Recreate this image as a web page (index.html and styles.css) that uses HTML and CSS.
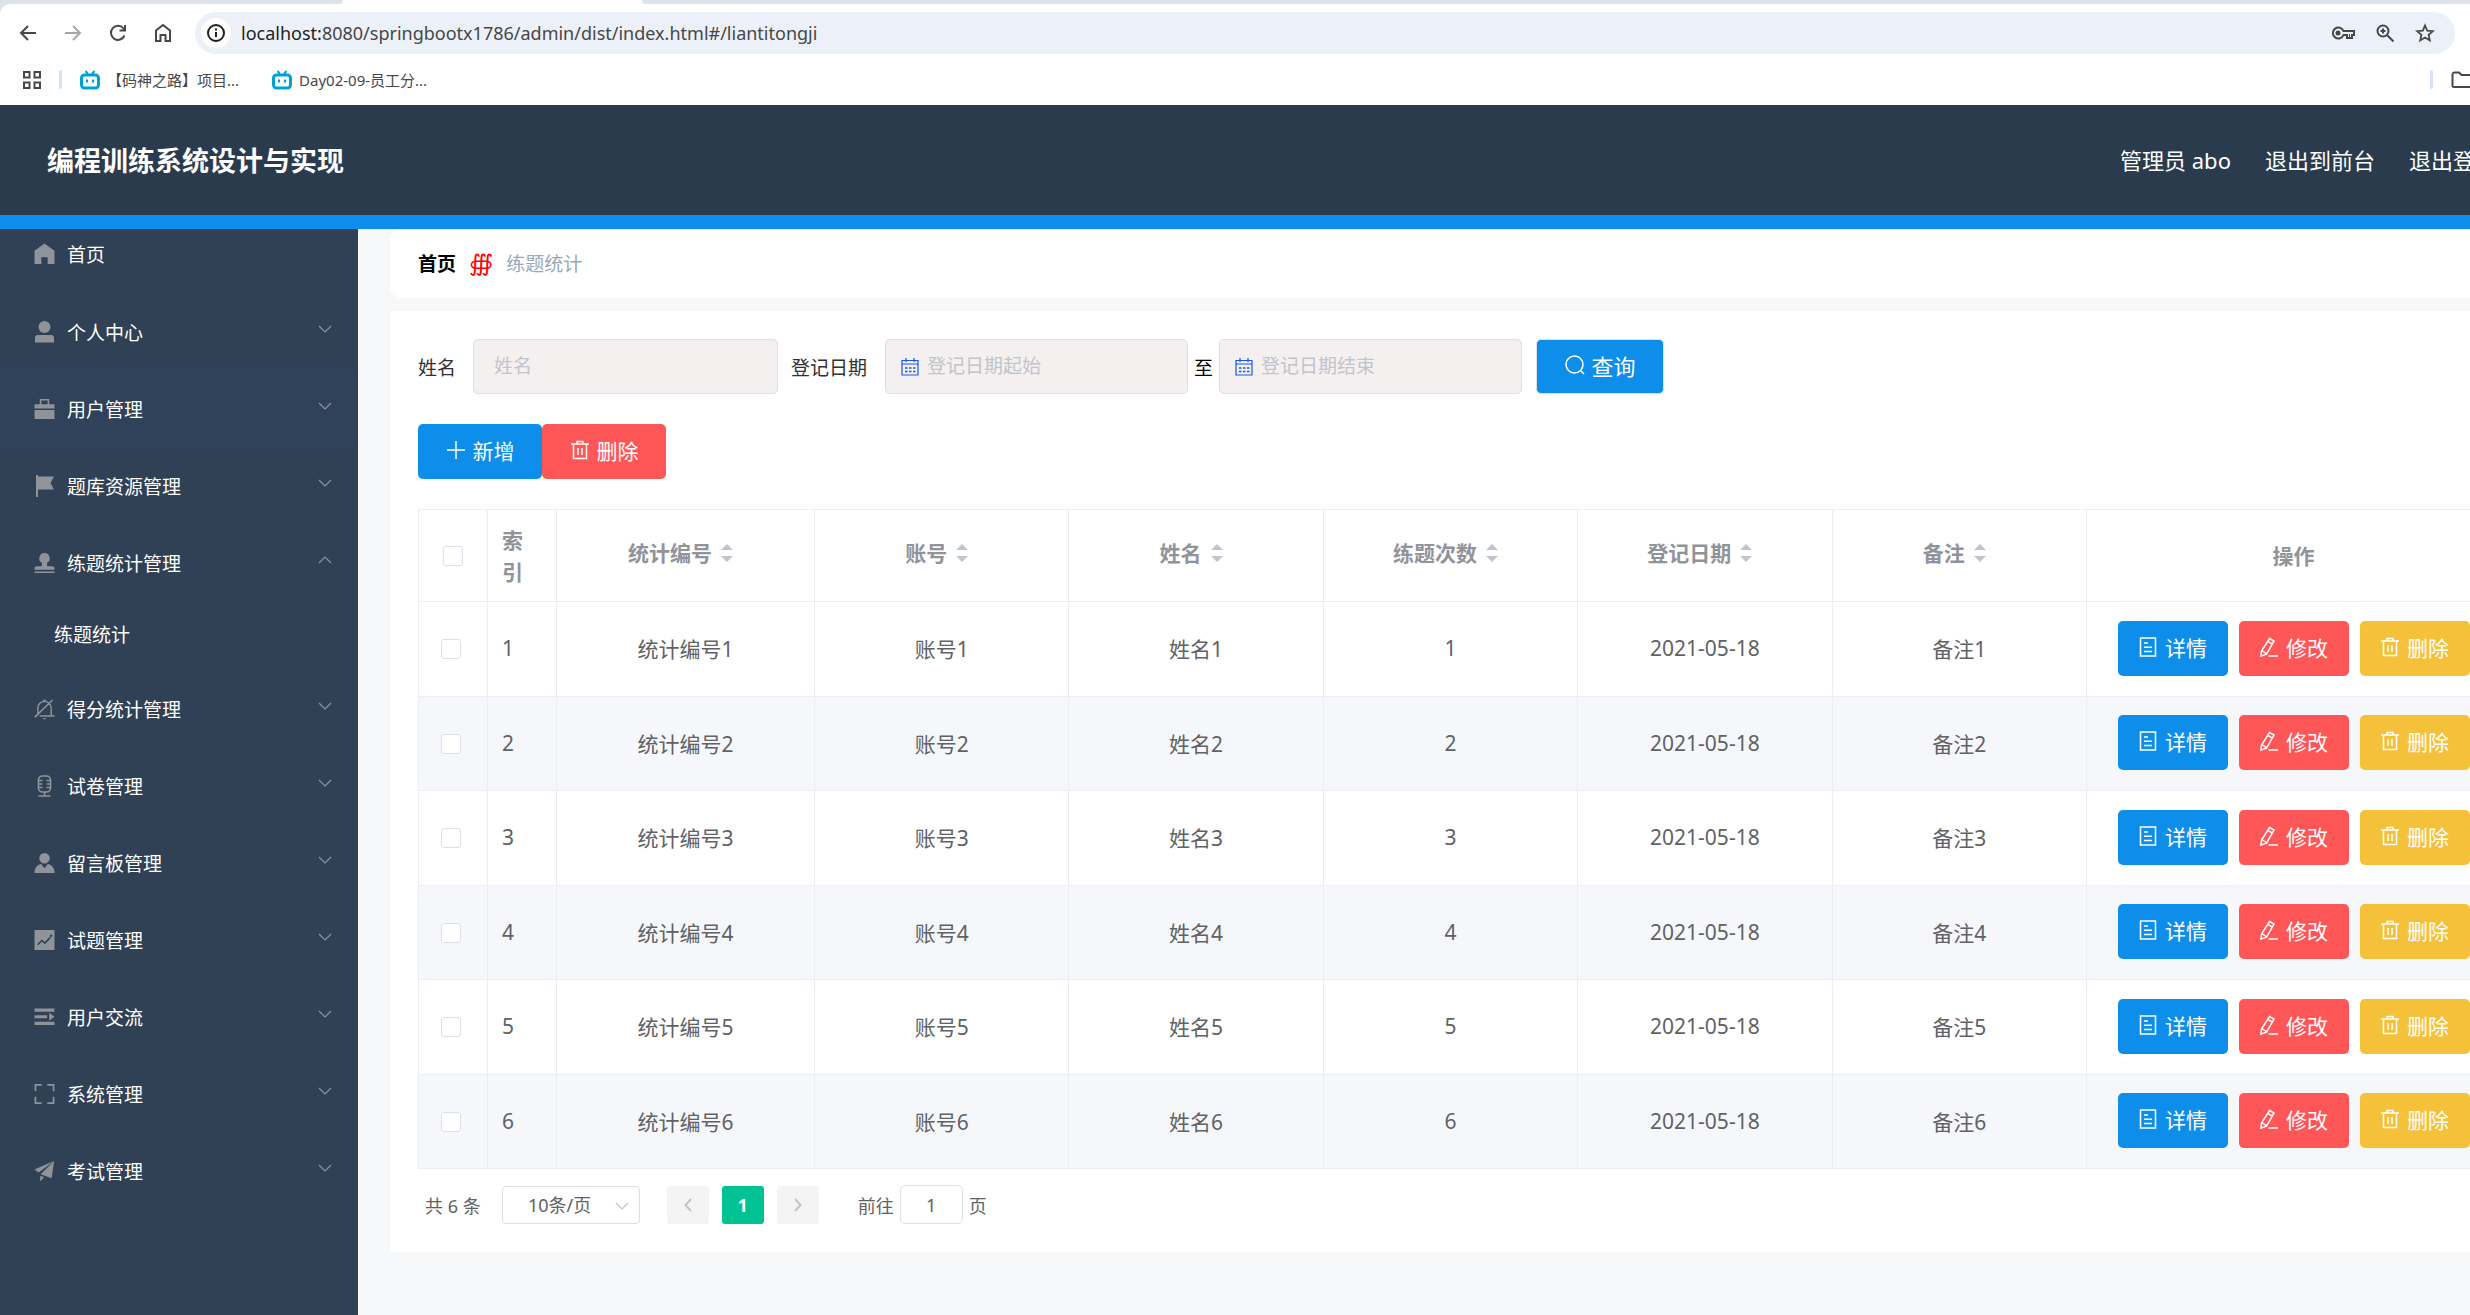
FILE: index.html
```html
<!DOCTYPE html>
<html lang="zh-CN">
<head>
    <meta charset="UTF-8">
    <meta name="viewport" content="width=device-width, initial-scale=1.0">
    <title>编程训练系统设计与实现</title>
    <link rel="stylesheet" href="styles.css">
</head>
<body>

    <!-- Icon sprite -->
    <svg class="sprite" xmlns="http://www.w3.org/2000/svg">
        <symbol id="i-back" viewBox="0 0 20 20"><path d="M18 10H3M10 3l-7 7 7 7" fill="none" stroke="currentColor" stroke-width="2"/></symbol>
        <symbol id="i-forward" viewBox="0 0 20 20"><path d="M2 10h15M10 3l7 7-7 7" fill="none" stroke="currentColor" stroke-width="2"/></symbol>
        <symbol id="i-reload" viewBox="0 0 20 20"><path d="M16.500 12.500A7 7 0 1 1 15.500 5.500L17 7M17 2v5.500h-5.500" fill="none" stroke="currentColor" stroke-width="2"/></symbol>
        <symbol id="i-house" viewBox="0 0 20 20"><path d="M3 18V7.500L10 2l7 5.500V18h-4.500v-6h-5v6z" fill="none" stroke="currentColor" stroke-width="2"/></symbol>
        <symbol id="i-info" viewBox="0 0 20 20"><circle cx="10" cy="10" r="8" fill="none" stroke="currentColor" stroke-width="2"/><path d="M9 9h2v5H9zM9 5.500h2v2H9z" fill="currentColor"/></symbol>
        <symbol id="i-key" viewBox="0 0 24 20"><path d="M12.500 8A5.500 5.500 0 1 0 12.500 12H16v3h5v-3h2V8z" fill="none" stroke="currentColor" stroke-width="2"/><circle cx="7" cy="10" r="2.500" fill="currentColor"/><path d="M18.500 11v4" stroke="currentColor"/></symbol>
        <symbol id="i-zoom" viewBox="0 0 20 20"><circle cx="8" cy="8" r="5.500" fill="none" stroke="currentColor" stroke-width="2"/><path d="M12 12l6.500 6.500M8 5.500v5M5.500 8h5" fill="none" stroke="currentColor" stroke-width="2"/></symbol>
        <symbol id="i-star" viewBox="0 0 20 20"><path d="M10 2.500l2.200 5.200 5.600.5-4.200 3.700 1.200 5.500-4.800-2.900-4.800 2.900 1.200-5.500-4.200-3.700 5.600-.5z" fill="none" stroke="currentColor" stroke-width="1.800"/></symbol>
        <symbol id="i-apps" viewBox="0 0 20 20"><path d="M2 2h5.500v5.500H2zM12.500 2H18v5.500h-5.500zM2 12.500h5.500V18H2zM12.500 12.500H18V18h-5.500z" fill="none" stroke="currentColor" stroke-width="2"/></symbol>
        <symbol id="i-bili" viewBox="0 0 20 20"><path d="M5.500 1l2.500 3M14.500 1L12 4" stroke="currentColor" stroke-width="2"/><rect x="1.500" y="5" width="17" height="13" rx="3" fill="none" stroke="currentColor" stroke-width="3"/><path d="M7 9.500v3M13 9.500v3" stroke="currentColor" stroke-width="2"/></symbol>
        <symbol id="i-folder" viewBox="0 0 22 18"><path d="M1.500 14.500v-11a2 2 0 0 1 2-2H8l2.500 2.500H19a1.500 1.500 0 0 1 1.500 1.500v9a1.500 1.500 0 0 1-1.500 1.500H3a1.500 1.500 0 0 1-1.500-1.500z" fill="none" stroke="currentColor" stroke-width="2"/></symbol>
        <symbol id="i-home" viewBox="0 0 20 20"><path d="M10 0l9.500 7v12.500H13V13H7v6.500H.5V7z" fill="currentColor"/></symbol>
        <symbol id="i-user" viewBox="0 0 20 22"><circle cx="10" cy="6" r="6" fill="currentColor"/><path d="M.5 21.500V17a3 3 0 0 1 3-3h13a3 3 0 0 1 3 3v4.500z" fill="currentColor"/></symbol>
        <symbol id="i-case" viewBox="0 0 20 20"><path d="M.5 5.500H5.500V.5h9v5h5v4H.5zM7 5.500h6V2H7zM.5 11h19v8.500H.5z" fill="currentColor" fill-rule="evenodd"/></symbol>
        <symbol id="i-flag" viewBox="0 0 20 22"><path d="M1.500 0h2v1.500h16L16 8l3.500 6.500h-16V22h-2z" fill="currentColor"/></symbol>
        <symbol id="i-stamp" viewBox="0 0 20 20"><path d="M10 .5a5 5 0 0 1 2.500 9.300V13H17a2.500 2.500 0 0 1 2.500 2.500v1H.5v-1A2.500 2.500 0 0 1 3 13h4.500V9.800A5 5 0 0 1 10 .5zM.5 18h19v1.500H.5z" fill="currentColor"/></symbol>
        <symbol id="i-bell" viewBox="0 0 22 22"><path d="M4 18V10a7 7 0 0 1 14 0v8M6 18.300h15.500M1 18.300h2M19.500 1.500L.8 19.500M9.500 2h3" fill="none" stroke="currentColor" stroke-width="1.500"/><path d="M9 20.500h4L11 22z" fill="currentColor"/></symbol>
        <symbol id="i-mic" viewBox="0 0 20 22"><path d="M4 5a4 4 0 0 1 4-4h4a4 4 0 0 1 4 4v8a4 4 0 0 1-4 4H8a4 4 0 0 1-4-4zM10 17v4M4 21h12M4 5.500h4M12 5.500h4M4 9h4M12 9h4M4 12.500h4M12 12.500h4" fill="none" stroke="currentColor" stroke-width="1.600"/></symbol>
        <symbol id="i-person" viewBox="0 0 22 22"><circle cx="11" cy="6" r="5.500" fill="currentColor"/><path d="M.5 21.500C.5 16 3 13 7.500 12L11 16.500 14.500 12c4.500 1 7 4 7 9.500z" fill="currentColor"/></symbol>
        <symbol id="i-chart" viewBox="0 0 20 20"><path d="M.5.5h19v19H.5z" fill="currentColor"/><path d="M3.500 14.500l4-4 3 2.500 5-5.500" fill="none" stroke="#304156" stroke-width="1.500"/><circle cx="16.300" cy="6" r="1.200" fill="#304156"/></symbol>
        <symbol id="i-list" viewBox="0 0 20 20"><path d="M.5 2h19v3H.5zM.5 8.300h12v3H.5zM.5 14.500h19v3H.5zM14.500 6l5 3.800-5 3.800z" fill="currentColor"/></symbol>
        <symbol id="i-full" viewBox="0 0 22 22"><path d="M1.500 8V1.500H8M14 1.500h6.500V8M20.500 14v6.500H14M8 20.500H1.500V14" fill="none" stroke="currentColor" stroke-width="1.800"/></symbol>
        <symbol id="i-send" viewBox="0 0 22 22"><path d="M21 .5L.5 9.500 5 12.500zM21 .5L7 14.500l11.500 4zM6.500 16v6l4-4.500z" fill="currentColor"/></symbol>
        <symbol id="i-down" viewBox="0 0 14 8"><path d="M1 1l6 6 6-6" fill="none" stroke="currentColor" stroke-width="1.200"/></symbol>
        <symbol id="i-up" viewBox="0 0 14 8"><path d="M1 7l6-6 6 6" fill="none" stroke="currentColor" stroke-width="1.200"/></symbol>
        <symbol id="i-prev" viewBox="0 0 8 14"><path d="M7 1L1.500 7 7 13" fill="none" stroke="currentColor" stroke-width="2"/></symbol>
        <symbol id="i-next" viewBox="0 0 8 14"><path d="M1 1l5.500 6L1 13" fill="none" stroke="currentColor" stroke-width="2"/></symbol>
        <symbol id="i-date" viewBox="0 0 18 18"><path d="M1 2.500h16v14.500H1zM5 0v4M13 0v4M1 6h16" fill="none" stroke="currentColor" stroke-width="1.200"/><path d="M4 10h2.500M8 10h2.500M12 10h2.500M4 13.500h2.500M8 13.500h2.500M12 13.500h2.500" stroke="currentColor" stroke-width="1.500"/></symbol>
        <symbol id="i-search" viewBox="0 0 20 20"><circle cx="9.500" cy="9.500" r="8.500" fill="none" stroke="currentColor" stroke-width="1.500"/><path d="M15.500 15.500l3.500 3.500" stroke="currentColor" stroke-width="1.500"/></symbol>
        <symbol id="i-plus" viewBox="0 0 20 20"><path d="M10 1v18M1 10h18" stroke="currentColor" stroke-width="1.500"/></symbol>
        <symbol id="i-trash" viewBox="0 0 20 20"><path d="M1 4h18M3.500 4v14.500h13V4M7 4V1.500h6V4M8 8v7M12 8v7" fill="none" stroke="currentColor" stroke-width="1.500"/></symbol>
        <symbol id="i-doc" viewBox="0 0 20 20"><path d="M2.500 1h15v18h-15zM6 6h4M6 10.300h8M6 14.500h8" fill="none" stroke="currentColor" stroke-width="1.500"/></symbol>
        <symbol id="i-edit" viewBox="0 0 20 20"><path d="M10.500 1.500l4.500 2.600-7.500 13L2 19l.5-5zM9 4.500l4.500 2.600M2.800 13.500l4.500 3M9.500 19h9.500" fill="none" stroke="currentColor" stroke-width="1.500"/></symbol>
    </svg>

    <div class="screen">

        <!-- Browser bar -->
        <div class="browser">
            <div class="tab-strip">
                <span class="tab-side tab-left"></span>
                <span class="tab-side tab-right"></span>
            </div>
            <div class="toolbar">
                <button class="tool" aria-label="后退"><svg><use href="#i-back"/></svg></button>
                <button class="tool disabled" aria-label="前进"><svg><use href="#i-forward"/></svg></button>
                <button class="tool" aria-label="重新加载"><svg><use href="#i-reload"/></svg></button>
                <button class="tool" aria-label="主页"><svg><use href="#i-house"/></svg></button>
                <div class="address">
                    <span class="site-info"><svg><use href="#i-info"/></svg></span>
                    <span class="url"><span class="host">localhost:</span>8080/springbootx1786/admin/dist/index.html#/liantitongji</span>
                    <svg class="key"><use href="#i-key"/></svg>
                    <svg><use href="#i-zoom"/></svg>
                    <svg><use href="#i-star"/></svg>
                </div>
            </div>
            <div class="bookmarks">
                <svg class="apps"><use href="#i-apps"/></svg>
                <span class="split"></span>
                <a class="bookmark" href="#"><svg><use href="#i-bili"/></svg>【码神之路】项目...</a>
                <a class="bookmark" href="#"><svg><use href="#i-bili"/></svg>Day02-09-员工分...</a>
                <span class="split last"></span>
                <svg class="folder"><use href="#i-folder"/></svg>
            </div>
        </div>

        <!-- Page header -->
        <header class="header">
            <h1>编程训练系统设计与实现</h1>
            <nav class="header-links">
                <span>管理员 abo</span>
                <a href="#">退出到前台</a>
                <a href="#">退出登录</a>
            </nav>
        </header>

        <div class="layout">

            <!-- Side menu -->
            <nav class="sidebar">
                <a class="menu-item home" href="#"><svg class="icon"><use href="#i-home"/></svg><span>首页</span></a>
                <a class="menu-item" href="#"><svg class="icon"><use href="#i-user"/></svg><span>个人中心</span><svg class="arrow"><use href="#i-down"/></svg></a>
                <a class="menu-item hover" href="#"><svg class="icon"><use href="#i-case"/></svg><span>用户管理</span><svg class="arrow"><use href="#i-down"/></svg></a>
                <a class="menu-item" href="#"><svg class="icon"><use href="#i-flag"/></svg><span>题库资源管理</span><svg class="arrow"><use href="#i-down"/></svg></a>
                <a class="menu-item" href="#"><svg class="icon"><use href="#i-stamp"/></svg><span>练题统计管理</span><svg class="arrow"><use href="#i-up"/></svg></a>
                <a class="menu-sub" href="#">练题统计</a>
                <a class="menu-item" href="#"><svg class="icon"><use href="#i-bell"/></svg><span>得分统计管理</span><svg class="arrow"><use href="#i-down"/></svg></a>
                <a class="menu-item" href="#"><svg class="icon"><use href="#i-mic"/></svg><span>试卷管理</span><svg class="arrow"><use href="#i-down"/></svg></a>
                <a class="menu-item" href="#"><svg class="icon"><use href="#i-person"/></svg><span>留言板管理</span><svg class="arrow"><use href="#i-down"/></svg></a>
                <a class="menu-item" href="#"><svg class="icon"><use href="#i-chart"/></svg><span>试题管理</span><svg class="arrow"><use href="#i-down"/></svg></a>
                <a class="menu-item" href="#"><svg class="icon"><use href="#i-list"/></svg><span>用户交流</span><svg class="arrow"><use href="#i-down"/></svg></a>
                <a class="menu-item" href="#"><svg class="icon"><use href="#i-full"/></svg><span>系统管理</span><svg class="arrow"><use href="#i-down"/></svg></a>
                <a class="menu-item" href="#"><svg class="icon"><use href="#i-send"/></svg><span>考试管理</span><svg class="arrow"><use href="#i-down"/></svg></a>
            </nav>

            <main class="main">
                <div class="breadcrumb">
                    <a href="#">首页</a>
                    <span class="separator">∰</span>
                    <span class="current">练题统计</span>
                </div>

                <div class="card">
                    <!-- Search form -->
                    <form class="search">
                        <label for="name">姓名</label>
                        <input class="input" type="text" id="name" placeholder="姓名">
                        <label for="start">登记日期</label>
                        <div class="date-box">
                            <svg><use href="#i-date"/></svg>
                            <input class="input" type="text" id="start" placeholder="登记日期起始">
                        </div>
                        <label class="to" for="end">至</label>
                        <div class="date-box">
                            <svg><use href="#i-date"/></svg>
                            <input class="input" type="text" id="end" placeholder="登记日期结束">
                        </div>
                        <button class="btn blue query" type="button"><svg><use href="#i-search"/></svg>查询</button>
                    </form>

                    <div class="actions">
                        <button class="btn blue"><svg><use href="#i-plus"/></svg>新增</button>
                        <button class="btn red"><svg><use href="#i-trash"/></svg>删除</button>
                    </div>

                    <!-- Data table -->
                    <table class="table">
                        <colgroup>
                            <col class="col-check"><col class="col-index"><col class="col-code">
                            <col><col><col><col><col>
                            <col class="col-ops">
                        </colgroup>
                        <thead>
                            <tr>
                                <th class="check"><input type="checkbox" aria-label="全选"></th>
                                <th class="index">索引</th>
                                <th><span class="sort">统计编号<i class="caret"></i></span></th>
                                <th><span class="sort">账号<i class="caret"></i></span></th>
                                <th><span class="sort">姓名<i class="caret"></i></span></th>
                                <th><span class="sort">练题次数<i class="caret"></i></span></th>
                                <th><span class="sort">登记日期<i class="caret"></i></span></th>
                                <th><span class="sort">备注<i class="caret"></i></span></th>
                                <th>操作</th>
                            </tr>
                        </thead>
                        <tbody>
                            <tr>
                                <td class="check"><input type="checkbox" aria-label="选择1"></td>
                                <td class="index">1</td><td>统计编号1</td><td>账号1</td><td>姓名1</td><td>1</td><td>2021-05-18</td><td>备注1</td>
                                <td><div class="ops">
                                    <button class="btn blue"><svg><use href="#i-doc"/></svg>详情</button>
                                    <button class="btn red"><svg><use href="#i-edit"/></svg>修改</button>
                                    <button class="btn yellow"><svg><use href="#i-trash"/></svg>删除</button>
                                </div></td>
                            </tr>
                            <tr>
                                <td class="check"><input type="checkbox" aria-label="选择2"></td>
                                <td class="index">2</td><td>统计编号2</td><td>账号2</td><td>姓名2</td><td>2</td><td>2021-05-18</td><td>备注2</td>
                                <td><div class="ops">
                                    <button class="btn blue"><svg><use href="#i-doc"/></svg>详情</button>
                                    <button class="btn red"><svg><use href="#i-edit"/></svg>修改</button>
                                    <button class="btn yellow"><svg><use href="#i-trash"/></svg>删除</button>
                                </div></td>
                            </tr>
                            <tr>
                                <td class="check"><input type="checkbox" aria-label="选择3"></td>
                                <td class="index">3</td><td>统计编号3</td><td>账号3</td><td>姓名3</td><td>3</td><td>2021-05-18</td><td>备注3</td>
                                <td><div class="ops">
                                    <button class="btn blue"><svg><use href="#i-doc"/></svg>详情</button>
                                    <button class="btn red"><svg><use href="#i-edit"/></svg>修改</button>
                                    <button class="btn yellow"><svg><use href="#i-trash"/></svg>删除</button>
                                </div></td>
                            </tr>
                            <tr>
                                <td class="check"><input type="checkbox" aria-label="选择4"></td>
                                <td class="index">4</td><td>统计编号4</td><td>账号4</td><td>姓名4</td><td>4</td><td>2021-05-18</td><td>备注4</td>
                                <td><div class="ops">
                                    <button class="btn blue"><svg><use href="#i-doc"/></svg>详情</button>
                                    <button class="btn red"><svg><use href="#i-edit"/></svg>修改</button>
                                    <button class="btn yellow"><svg><use href="#i-trash"/></svg>删除</button>
                                </div></td>
                            </tr>
                            <tr>
                                <td class="check"><input type="checkbox" aria-label="选择5"></td>
                                <td class="index">5</td><td>统计编号5</td><td>账号5</td><td>姓名5</td><td>5</td><td>2021-05-18</td><td>备注5</td>
                                <td><div class="ops">
                                    <button class="btn blue"><svg><use href="#i-doc"/></svg>详情</button>
                                    <button class="btn red"><svg><use href="#i-edit"/></svg>修改</button>
                                    <button class="btn yellow"><svg><use href="#i-trash"/></svg>删除</button>
                                </div></td>
                            </tr>
                            <tr>
                                <td class="check"><input type="checkbox" aria-label="选择6"></td>
                                <td class="index">6</td><td>统计编号6</td><td>账号6</td><td>姓名6</td><td>6</td><td>2021-05-18</td><td>备注6</td>
                                <td><div class="ops">
                                    <button class="btn blue"><svg><use href="#i-doc"/></svg>详情</button>
                                    <button class="btn red"><svg><use href="#i-edit"/></svg>修改</button>
                                    <button class="btn yellow"><svg><use href="#i-trash"/></svg>删除</button>
                                </div></td>
                            </tr>
                        </tbody>
                    </table>

                    <!-- Pagination -->
                    <div class="pagination">
                        <span>共 6 条</span>
                        <div class="size-box">
                            <select aria-label="每页条数">
                                <option>10条/页</option>
                                <option>20条/页</option>
                            </select>
                            <svg><use href="#i-down"/></svg>
                        </div>
                        <div class="pager">
                            <button aria-label="上一页"><svg><use href="#i-prev"/></svg></button>
                            <button class="active">1</button>
                            <button aria-label="下一页"><svg><use href="#i-next"/></svg></button>
                        </div>
                        <div class="jump">
                            <label for="page">前往</label>
                            <input type="text" id="page" value="1">
                            <span>页</span>
                        </div>
                    </div>
                </div>
            </main>
        </div>
    </div>

</body>
</html>
```
FILE: styles.css
```css
/* --- Base --- */
* {
    box-sizing: border-box;
}

body {
    margin: 0;
    overflow: hidden;
    font-family: "Noto Sans", "Noto Sans CJK SC", sans-serif;
    font-size: 19px;
    color: #303133;
    background-color: #f6f8fa;
}

a {
    color: inherit;
    text-decoration: none;
}

button, input, select {
    font-family: inherit;
    margin: 0;
}

svg {
    display: block;
    flex: none;
    width: 20px;
    height: 20px;
}

.sprite {
    position: absolute;
    width: 0;
    height: 0;
}

/* the page is a little wider than the window */
.screen {
    width: calc(100% + 90px);
    min-height: 100vh;
    display: flex;
    flex-direction: column;
}

/* --- Browser bar --- */
.browser {
    height: 105px;
    background-color: #dee3ea;
    color: #474747;
}

.tab-strip {
    display: flex;
    justify-content: space-between;
    height: 4px;
    background-color: #fff;
}

.tab-side {
    background-color: #dee3ea;
}

.tab-left {
    width: 343px;
    border-radius: 0 0 8px 0;
}

.tab-right {
    width: calc(100% - 642px);
    border-radius: 0 0 0 8px;
}

.toolbar {
    display: flex;
    align-items: center;
    gap: 25px;
    height: 58px;
    padding: 0 105px 0 18px;
    background-color: #fff;
    border-radius: 10px 0 0 0;
}

.tool {
    padding: 0;
    border: none;
    background: none;
    color: #474747;
}

.tool.disabled {
    color: #a8a8a8;
}

.address {
    flex: 1;
    display: flex;
    align-items: center;
    gap: 20px;
    height: 42px;
    margin-left: -3px;
    padding: 0 20px 0 6px;
    border-radius: 21px;
    background-color: #ebf0f9;
}

.site-info {
    padding: 5px;
    border-radius: 50%;
    background-color: #fff;
    color: #1f1f1f;
}

.url {
    flex: 1;
    margin-left: -10px;
    font-size: 18px;
}

.host {
    color: #1f1f1f;
}

.key {
    width: 24px;
}

.bookmarks {
    display: flex;
    align-items: center;
    height: 43px;
    padding: 0 87px 8px 22px;
    background-color: #fff;
    font-size: 15px;
}

.split {
    width: 3px;
    height: 19px;
    margin: 0 18px 0 17px;
    border-radius: 2px;
    background-color: #d3e3fd;
}

.split.last {
    margin-left: auto;
}

.bookmark {
    display: flex;
    align-items: center;
    gap: 7px;
    margin-right: 33px;
}

.bookmark svg {
    color: #00a1d6;
}

.folder {
    width: 22px;
}

/* --- Page header --- */
.header {
    display: flex;
    align-items: center;
    justify-content: space-between;
    height: 124px;
    padding: 0 63px 2px 47px;
    border-bottom: 14px solid #0d8eeb;
    background-color: #2b3b4e;
    color: #fff;
}

.header h1 {
    margin: 0;
    font-size: 27px;
    font-weight: 700;
}

.header-links {
    display: flex;
    gap: 34px;
    font-size: 22px;
}

/* --- Layout --- */
.layout {
    flex: 1;
    display: flex;
}

.sidebar {
    flex: none;
    width: 358px;
    background-color: #304156;
    color: #fff;
}

.menu-item {
    display: flex;
    align-items: center;
    height: 77px;
    padding: 3px 26px 0 34px;
}

.menu-item.home {
    height: 63px;
    padding: 0 26px 14px 34px;
}

.menu-item.hover {
    background-color: #2f425a;
}

.menu-item .icon {
    width: 21px;
    height: 22px;
    margin-right: 12px;
    color: #909399;
}

.menu-item .arrow {
    width: 14px;
    height: 8px;
    margin: 0 0 6px auto;
    color: #909399;
}

.menu-sub {
    display: flex;
    align-items: center;
    height: 69px;
    padding: 0 0 2px 54px;
}

.main {
    flex: 1;
    padding: 0 32px;
}

.breadcrumb {
    display: flex;
    align-items: center;
    gap: 13px;
    height: 69px;
    margin-bottom: 13px;
    padding: 0 0 2px 28px;
    border-radius: 12px;
    background-color: #fff;
}

.breadcrumb a {
    font-weight: 700;
    color: #000;
}

.separator {
    font-family: "DejaVu Sans", sans-serif;
    font-size: 23px;
    color: #f00;
}

.current {
    color: #97a8be;
}

.card {
    padding: 28px 27px 28px 28px;
    background-color: #fff;
}

/* --- Search form --- */
.search {
    display: flex;
    align-items: center;
    margin-bottom: 30px;
}

.search label {
    margin-right: 17px;
}

.search label[for="start"] {
    margin-right: 18px;
}

.search .to {
    margin: 0 6px;
    color: #000;
}

.input {
    width: 305px;
    height: 55px;
    margin-right: 13px;
    padding: 0 20px 2px;
    border: 1px solid #dcdfe6;
    border-radius: 5px;
    background-color: #f4f0f0;
    font-size: 19px;
}

.input::placeholder {
    color: #c0c4cc;
}

.date-box {
    position: relative;
}

.date-box .input {
    display: block;
    width: 303px;
    margin: 0;
    padding-left: 41px;
}

.date-box svg {
    position: absolute;
    left: 16px;
    top: 19px;
    width: 18px;
    height: 18px;
    color: #1456f0;
}

/* --- Buttons --- */
.btn {
    display: flex;
    align-items: center;
    justify-content: center;
    gap: 7px;
    width: 124px;
    height: 55px;
    padding: 0 0 3px;
    border: none;
    border-radius: 5px;
    color: #fff;
    font-size: 21px;
    cursor: pointer;
}

.blue { background-color: #0d8eeb; }
.red { background-color: #ff5757; }
.yellow { background-color: #f5c13b; }

.query {
    width: 128px;
    margin-left: 14px;
    border: 1px solid #dcdfe6;
    font-size: 22px;
}

.actions {
    display: flex;
    margin-bottom: 30px;
}

/* --- Table --- */
.table {
    width: 100%;
    table-layout: fixed;
    border-collapse: collapse;
    color: #606266;
    font-size: 21px;
}

.table th,
.table td {
    padding: 0;
    border: 1px solid #ebeef5;
    text-align: center;
}

.table th {
    height: 92px;
    color: #909399;
    font-weight: 700;
    line-height: 32px;
}

.table td {
    height: 95px;
    padding-bottom: 2px;
}

.table tr:nth-child(even) td {
    height: 94px;
    background-color: #f5f7fa;
}

.col-check, .col-index { width: 69px; }
.col-code { width: 258px; }
.col-ops { width: 414px; }

.table th.check {
    padding-left: 24px;
}

.table td.check {
    padding: 0 0 0 22px;
}

.table .index {
    text-align: left;
    padding-left: 14px;
}

.table th.index {
    padding-right: 32px;
}

.table input {
    display: block;
    appearance: none;
    width: 20px;
    height: 20px;
    border: 1px solid #dcdfe6;
    border-radius: 3px;
    background-color: #fff;
}

.sort {
    display: inline-flex;
    align-items: center;
    padding-bottom: 5px;
}

/* up and down triangles */
.caret {
    width: 12px;
    margin: 0 10px 0 9px;
}

.caret::before,
.caret::after {
    content: "";
    display: block;
    border: 6px solid transparent;
}

.caret::before {
    border-top: none;
    border-bottom-color: #c0c4cc;
    margin-bottom: 6px;
}

.caret::after {
    border-bottom: none;
    border-top-color: #c0c4cc;
}

.ops {
    display: flex;
    justify-content: center;
    gap: 11px;
}

.ops .btn {
    width: 110px;
}

/* --- Pagination --- */
.pagination {
    display: flex;
    align-items: center;
    padding: 16px 7px 0;
    color: #606266;
    font-size: 18px;
}

.size-box {
    position: relative;
    margin: 0 27px 0 21px;
}

.size-box select {
    display: block;
    appearance: none;
    width: 138px;
    height: 38px;
    padding: 0 22px 0 0;
    border: 1px solid #dcdfe6;
    border-radius: 4px;
    background-color: #fff;
    color: #606266;
    font-size: 18px;
    text-align: center;
    text-align-last: center;
}

.size-box svg {
    position: absolute;
    right: 11px;
    top: 16px;
    width: 14px;
    height: 8px;
    color: #c0c4cc;
}

.pager {
    display: flex;
    gap: 13px;
    margin-right: 39px;
}

.pager button {
    display: flex;
    align-items: center;
    justify-content: center;
    width: 42px;
    height: 38px;
    padding: 0;
    border: none;
    border-radius: 3px;
    background-color: #f4f4f5;
    color: #c0c4cc;
    font-size: 18px;
    font-weight: 700;
}

.pager svg {
    width: 8px;
    height: 14px;
}

.pager .active {
    background-color: #00c292;
    color: #fff;
}

.jump {
    display: flex;
    align-items: center;
    gap: 6px;
}

.jump input {
    width: 63px;
    height: 39px;
    border: 1px solid #dcdfe6;
    border-radius: 5px;
    background-color: #fff;
    color: #606266;
    font-size: 18px;
    text-align: center;
}
```
